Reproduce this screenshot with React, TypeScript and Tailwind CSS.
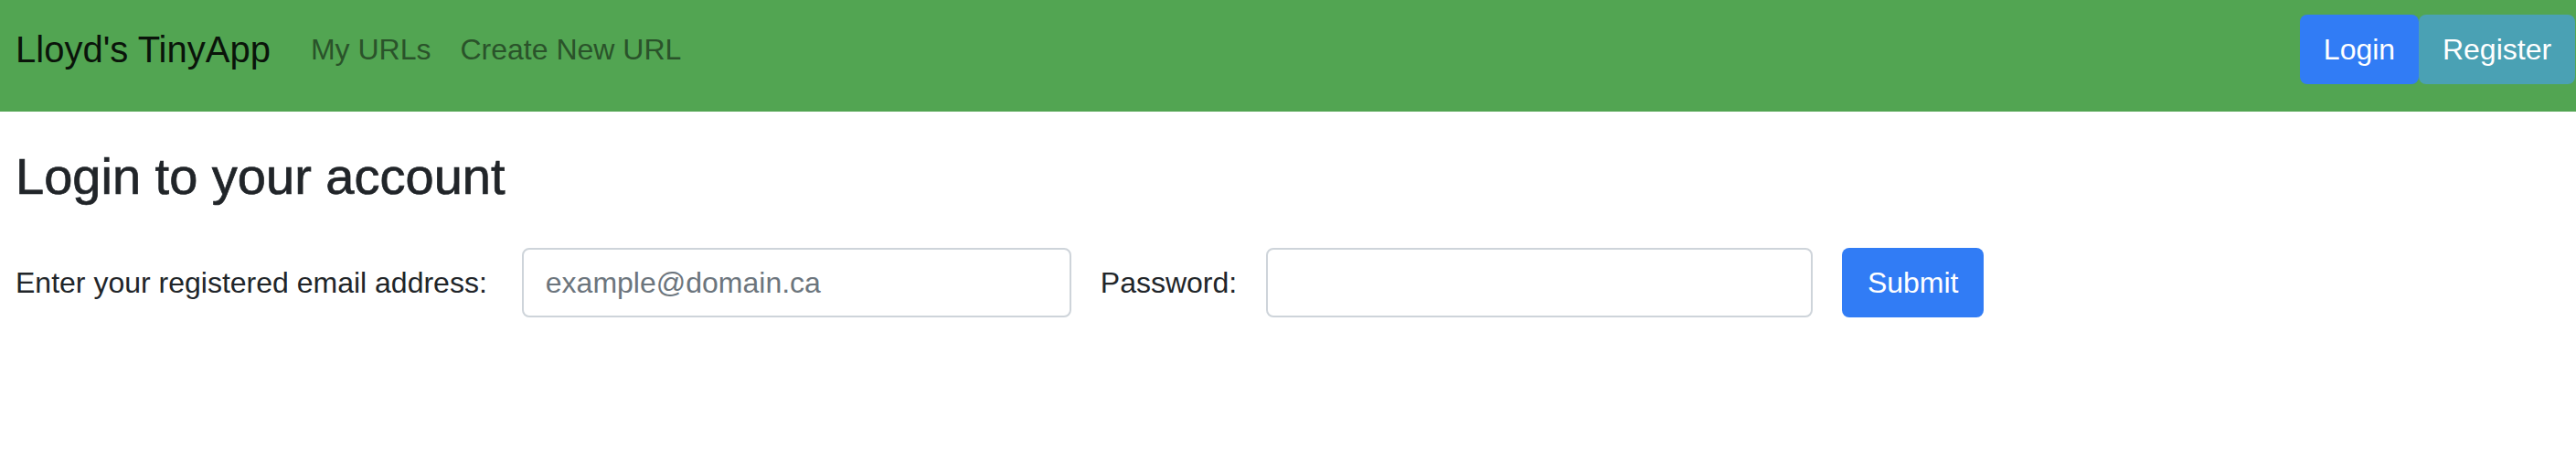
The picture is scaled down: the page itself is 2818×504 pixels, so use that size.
export default function App() {
  return (
    <div className="min-h-[504px] bg-white font-['Liberation_Sans',Arial,sans-serif]">
      <nav className="h-[122px] bg-[#52a552] flex items-start pt-[16px] pl-[17px] pr-[1px]">
        <a className="h-[76px] flex items-center text-[40px] text-[#0a140a] mr-[28px]">Lloyd's TinyApp</a>
        <div className="flex h-[76px] items-center text-[32px] text-[#2a532a]">
          <a className="px-[16px]">My URLs</a>
          <a className="px-[16px]">Create New URL</a>
        </div>
        <div className="ml-auto flex">
          <button className="h-[76px] w-[130px] rounded-[8px] bg-[#317cf5] text-white text-[32px]">Login</button>
          <button className="h-[76px] w-[171px] rounded-[8px] bg-[#4aa1b4] text-white text-[32px]">Register</button>
        </div>
      </nav>
      <main className="pl-[17px]">
        <h3 className="mt-[37px] text-[56px] leading-[1.2] font-medium text-[#212529] [-webkit-text-stroke:0.7px_#212529]">Login to your account</h3>
        <form className="mt-[45px] flex items-center gap-[32px]">
          <label className="text-[32px] text-[#212529] pr-[6px]">Enter your registered email address:</label>
          <input
            type="email"
            placeholder="example@domain.ca"
            className="h-[76px] w-[601px] border-2 border-[#ced4da] rounded-[8px] px-[24px] text-[32px] text-[#495057] placeholder:text-[#6c757d] bg-white"
          />
          <label className="text-[32px] text-[#212529]">Password:</label>
          <input
            type="password"
            className="h-[76px] w-[598px] border-2 border-[#ced4da] rounded-[8px] px-[24px] text-[32px] text-[#495057] bg-white"
          />
          <button type="button" className="h-[76px] w-[155px] rounded-[8px] bg-[#317cf5] text-white text-[32px]">Submit</button>
        </form>
      </main>
    </div>
  );
}
